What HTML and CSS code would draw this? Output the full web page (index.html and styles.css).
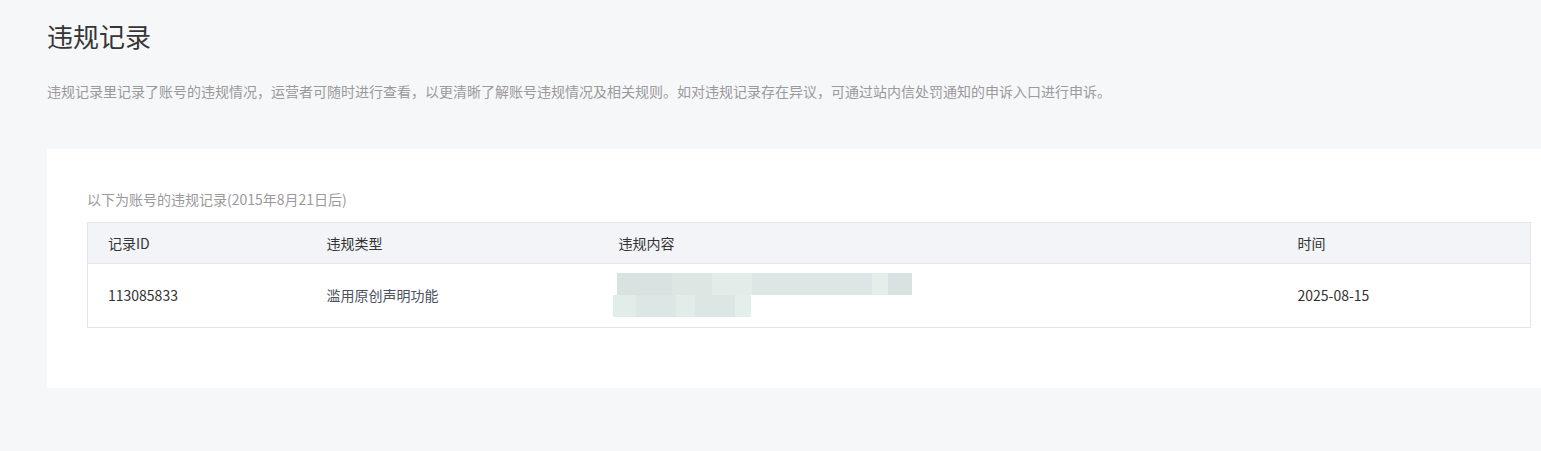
FILE: index.html
```html
<!DOCTYPE html>
<html lang="zh-CN">
<head>
<meta charset="utf-8">
<title>违规记录</title>
<link rel="stylesheet" href="styles.css">
</head>
<body>
<div class="page">
  <h1 class="title">违规记录</h1>
  <p class="desc">违规记录里记录了账号的违规情况，运营者可随时进行查看，以更清晰了解账号违规情况及相关规则。如对违规记录存在异议，可通过站内信处罚通知的申诉入口进行申诉。</p>
  <div class="card">
    <p class="sub">以下为账号的违规记录(2015年8月21日后)</p>
    <table class="tbl">
      <colgroup>
        <col class="c1"><col class="c2"><col class="c3"><col class="c4">
      </colgroup>
      <thead>
        <tr><th>记录ID</th><th>违规类型</th><th>违规内容</th><th>时间</th></tr>
      </thead>
      <tbody>
        <tr>
          <td>113085833</td>
          <td>滥用原创声明功能</td>
          <td class="blurcell">
            <div class="blur b1">
              <span class="s sa w55"></span><span class="s sb w40"></span><span class="s sc w40"></span><span class="s sd w40"></span><span class="s sd w40"></span><span class="s sd w40"></span><span class="s se w16"></span><span class="s sa w24"></span>
            </div>
            <div class="blur b2">
              <span class="s sc w23"></span><span class="s sd w40"></span><span class="s sc w19"></span><span class="s sd w40"></span><span class="s se w16"></span>
            </div>
          </td>
          <td>2025-08-15</td>
        </tr>
      </tbody>
    </table>
  </div>
</div>
</body>
</html>
```

FILE: styles.css
```css
html, body {
  margin: 0;
  padding: 0;
  background: #f6f7f9;
  overflow: hidden;
}
body {
  font-family: "Noto Sans CJK SC", "Microsoft YaHei", "Noto Sans", sans-serif;
  color: #333;
}
.page {
  padding: 18px 0 0 47px;
  width: 1524px;
}
.title {
  margin: 0;
  font-size: 26px;
  font-weight: 400;
  line-height: 36px;
  color: #353535;
}
.desc {
  margin: 27px 0 0;
  font-size: 14px;
  line-height: 20px;
  color: #9a9a9a;
}
.card {
  margin-top: 48px;
  background: #fff;
  padding: 40px 40px 60px;
}
.sub {
  margin: 0 0 13px;
  font-size: 14px;
  line-height: 20px;
  color: #9a9a9a;
}
.tbl {
  width: 100%;
  border-collapse: collapse;
  table-layout: fixed;
  border: 1px solid #e4e6eb;
  font-size: 14px;
}
.c1 { width: 219px; }
.c2 { width: 292px; }
.c3 { width: 679px; }
.tbl th {
  background: #f3f4f7;
  font-weight: 400;
  text-align: left;
  height: 40px;
  padding: 0 0 0 20px;
  border-bottom: 1px solid #e4e6eb;
  color: #333;
}
.tbl td {
  height: 61px;
  padding: 0 0 2px 20px;
  line-height: 20px;
  color: #333;
}
.tbl td:nth-child(2) { color: #4a5160; }
.tbl td.blurcell { padding: 0; }
.blur {
  display: flex;
  height: 22px;
}
.b1 { margin-left: 18px; margin-top: -1px; }
.b2 { margin-left: 14px; }
.s { display: block; height: 22px; }
.sa { background: #d8e2e1; }
.sb { background: #dce6e3; }
.sc { background: #e2ede9; }
.sd { background: #dce6e4; }
.se { background: #e4efeb; }
.w55 { width: 55px; }
.w40 { width: 40px; }
.w16 { width: 16px; }
.w24 { width: 24px; }
.w23 { width: 23px; }
.w19 { width: 19px; }
```
